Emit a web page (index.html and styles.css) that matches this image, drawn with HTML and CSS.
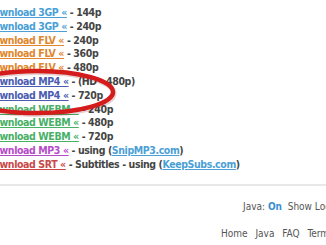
FILE: index.html
```html
<!DOCTYPE html>
<html lang="en">
<head>
    <meta charset="UTF-8">
    <title>Download links</title>
    <link rel="stylesheet" href="styles.css">
</head>
<body>
    <div class="page">
        <ul class="links">
            <li><a class="fmt-3gp" href="#">Download 3GP «</a> - 144p</li>
            <li><a class="fmt-3gp" href="#">Download 3GP «</a> - 240p</li>
            <li><a class="fmt-flv" href="#">Download FLV «</a> - 240p</li>
            <li><a class="fmt-flv" href="#">Download FLV «</a> - 360p</li>
            <li><a class="fmt-flv" href="#">Download FLV «</a> - 480p</li>
            <li><a class="fmt-mp4" href="#">Download MP4 «</a> - (HD - 480p)</li>
            <li><a class="fmt-mp4" href="#">Download MP4 «</a> - 720p</li>
            <li><a class="fmt-webm" href="#">Download WEBM «</a> - 240p</li>
            <li><a class="fmt-webm" href="#">Download WEBM «</a> - 480p</li>
            <li><a class="fmt-webm" href="#">Download WEBM «</a> - 720p</li>
            <li><a class="fmt-mp3" href="#">Download MP3 «</a> - using (<a class="ext" href="#">SnipMP3.com</a>)</li>
            <li><a class="fmt-srt" href="#">Download SRT «</a> - Subtitles - using (<a class="ext" href="#">KeepSubs.com</a>)</li>
        </ul>

        <!-- hand drawn marker round the mp4 rows -->
        <svg class="marker" width="200" height="60" viewBox="0 0 200 60">
            <ellipse cx="57" cy="28" rx="76" ry="21" fill="none" stroke="rgba(120,0,0,0.18)" stroke-width="5" transform="translate(1 1.5)"/>
            <ellipse cx="57" cy="28" rx="76" ry="21" fill="none" stroke="#d41c1c" stroke-width="4.5"/>
        </svg>
    </div>

    <hr class="divider">

    <div class="status">Java: <b>On</b>&nbsp;&nbsp;Show Login</div>
    <div class="footer-nav">
        <a href="#">Home</a>
        <a href="#">Java</a>
        <a href="#">FAQ</a>
        <a href="#">Terms</a>
    </div>
</body>
</html>
```

FILE: styles.css
```css
body {
    margin: 0;
    background: #ffffff;
    color: #444444;
    font-family: "DejaVu Sans Condensed", "DejaVu Sans", Verdana, sans-serif;
    overflow: hidden;
    white-space: nowrap;
}

.page {
    position: relative;
    margin-left: -14px;
    padding-top: 6px;
}

.links {
    list-style: none;
    margin: 0;
    padding: 0;
    font-size: 10.5px;
    font-weight: bold;
    letter-spacing: -0.4px;
    line-height: 13.8px;
}

.links a {
    text-decoration: underline;
}

.fmt-3gp, .ext { color: #4a9fd6; }
.fmt-flv { color: #e0862c; }
.fmt-mp4 { color: #4b5cb2; }
.fmt-webm { color: #48b066; }
.fmt-mp3 { color: #b64bc9; }
.fmt-srt { color: #c84848; }

.marker {
    position: absolute;
    left: -6px;
    top: 64px;
    overflow: visible;
}

.divider {
    border: none;
    border-top: 2px solid #e8e8e8;
    margin: 12px 0 0 0;
}

.status {
    padding-left: 243px;
    margin-top: 15px;
    font-size: 10px;
    color: #555555;
}

.status b {
    color: #3a8ed2;
}

.footer-nav {
    padding-left: 221px;
    margin-top: 16px;
    font-size: 10px;
}

.footer-nav a {
    color: #555555;
    text-decoration: none;
    margin-right: 5px;
}
```
